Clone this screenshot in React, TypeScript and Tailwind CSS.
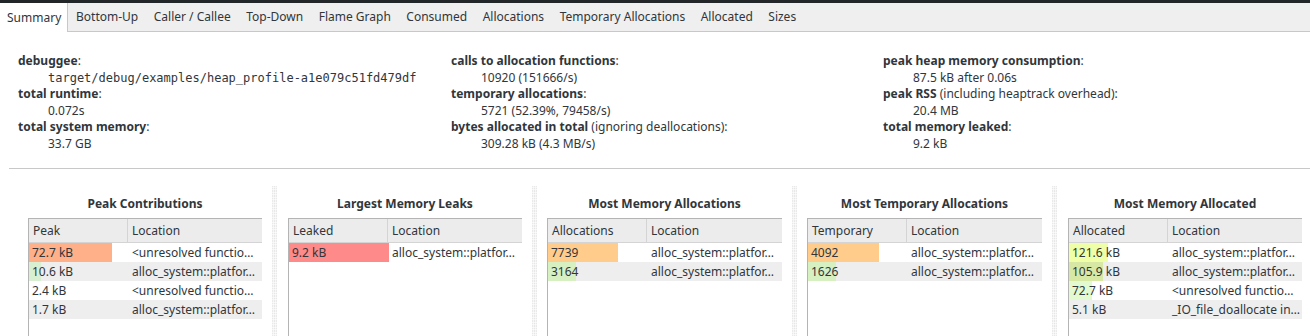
import React from "react";

const tabs = [
  "Summary",
  "Bottom-Up",
  "Caller / Callee",
  "Top-Down",
  "Flame Graph",
  "Consumed",
  "Allocations",
  "Temporary Allocations",
  "Allocated",
  "Sizes",
];

type Item = { label: string; extra?: string; value: string; mono?: boolean };

const cols: Item[][] = [
  [
    { label: "debuggee", value: "target/debug/examples/heap_profile-a1e079c51fd479df", mono: true },
    { label: "total runtime", value: "0.072s" },
    { label: "total system memory", value: "33.7 GB" },
  ],
  [
    { label: "calls to allocation functions", value: "10920 (151666/s)" },
    { label: "temporary allocations", value: "5721 (52.39%, 79458/s)" },
    { label: "bytes allocated in total", extra: " (ignoring deallocations)", value: "309.28 kB (4.3 MB/s)" },
  ],
  [
    { label: "peak heap memory consumption", value: "87.5 kB after 0.06s" },
    { label: "peak RSS", extra: " (including heaptrack overhead)", value: "20.4 MB" },
    { label: "total memory leaked", value: "9.2 kB" },
  ],
];

type Row = { v: string; loc: string; bar: number; color: string };
type Panel = { title: string; head: string; rows: Row[]; pl: string };

const panels: Panel[] = [
  {
    title: "Peak Contributions",
    head: "Peak",
    pl: "pl-[11px]",
    rows: [
      { v: "72.7 kB", loc: "<unresolved functio…", bar: 83, color: "#ffb088" },
      { v: "10.6 kB", loc: "alloc_system::platfor…", bar: 12, color: "#d8efd2" },
      { v: "2.4 kB", loc: "<unresolved functio…", bar: 0, color: "" },
      { v: "1.7 kB", loc: "alloc_system::platfor…", bar: 0, color: "" },
    ],
  },
  {
    title: "Largest Memory Leaks",
    head: "Leaked",
    pl: "pl-[11px]",
    rows: [{ v: "9.2 kB", loc: "alloc_system::platfor…", bar: 100, color: "#ff8a8a" }],
  },
  {
    title: "Most Memory Allocations",
    head: "Allocations",
    pl: "pl-[10px]",
    rows: [
      { v: "7739", loc: "alloc_system::platfor…", bar: 70, color: "#ffcc8c" },
      { v: "3164", loc: "alloc_system::platfor…", bar: 28, color: "#d6f0c2" },
    ],
  },
  {
    title: "Most Temporary Allocations",
    head: "Temporary",
    pl: "pl-[10px]",
    rows: [
      { v: "4092", loc: "alloc_system::platfor…", bar: 71, color: "#ffcc8c" },
      { v: "1626", loc: "alloc_system::platfor…", bar: 28, color: "#d6f0c2" },
    ],
  },
  {
    title: "Most Memory Allocated",
    head: "Allocated",
    pl: "pl-[11px]",
    rows: [
      { v: "121.6 kB", loc: "alloc_system::platfor…", bar: 39, color: "#efffa8" },
      { v: "105.9 kB", loc: "alloc_system::platfor…", bar: 34, color: "#d6e8a4" },
      { v: "72.7 kB", loc: "<unresolved functio…", bar: 23, color: "#e3fad0" },
      { v: "5.1 kB", loc: "_IO_file_doallocate in…", bar: 0, color: "" },
    ],
  },
];

function Handle() {
  return (
    <div className="w-[5px] shrink-0 self-stretch bg-[#e6e6e6] bg-[radial-gradient(circle,#ffffff_0.8px,transparent_1px)] bg-[length:2.5px_2.5px]" />
  );
}

function PanelView({ p }: { p: Panel }) {
  return (
    <div className={`w-[255px] shrink-0 flex flex-col pt-[9px] pr-[10px] ${p.pl}`}>
      <div className="h-[17px] leading-[17px] text-center font-bold text-[12px] text-[#31363b]">{p.title}</div>
      <div className="mt-[6px] flex-1 border-l border-t border-[#b4b4b4]">
        <div className="flex h-[24px] bg-[#ececec] border-b border-[#d4d4d4] items-center">
          <div className="w-[99px] h-full border-r border-[#d4d4d4] pl-[4px] flex items-center">{p.head}</div>
          <div className="flex-1 pl-[4px]">Location</div>
        </div>
        {p.rows.map((r, i) => (
          <div key={i} className={`flex h-[19px] items-center ${i % 2 === 1 ? "bg-[#eeeeee]" : "bg-white"}`}>
            <div className="relative w-[100px] h-full flex items-center">
              {r.bar > 0 && (
                <div className="absolute left-0 top-0 h-full" style={{ width: `${r.bar}px`, backgroundColor: r.color }} />
              )}
              <span className="relative pl-[3px]">{r.v}</span>
            </div>
            <div className="flex-1 pl-[3px] whitespace-nowrap overflow-hidden">{r.loc}</div>
          </div>
        ))}
      </div>
    </div>
  );
}

export default function App() {
  return (
    <div className="w-[1310px] h-[336px] overflow-hidden bg-white flex flex-col text-[12px] text-[#31363b] font-['Noto_Sans',sans-serif]">
      <div className="h-[3px] bg-[#232629] shrink-0" />
      <div className="h-[29px] shrink-0 flex bg-[#efefef] border-b border-[#c8c8c8]">
        {tabs.map((t, i) =>
          i === 0 ? (
            <div key={t} className="h-[29px] bg-white border-r border-[#c8c8c8] pl-[7px] pr-[6px] flex items-center">
              {t}
            </div>
          ) : (
            <div key={t} className="h-full px-[7.75px] flex items-center">
              {t}
            </div>
          )
        )}
      </div>
      <div className="grid grid-cols-[433px_432px_1fr] pl-[18px] pt-[21px] leading-[16.5px] shrink-0">
        {cols.map((c, ci) => (
          <div key={ci} className="flex flex-col">
            {c.map((it) => (
              <React.Fragment key={it.label}>
                <div className="whitespace-nowrap">
                  <span className="font-bold">{it.label}</span>
                  {it.extra}:
                </div>
                <div
                  className={`pl-[30px] whitespace-nowrap ${it.mono ? "font-['DejaVu_Sans_Mono',monospace]" : ""}`}
                >
                  {it.value}
                </div>
              </React.Fragment>
            ))}
          </div>
        ))}
      </div>
      <div className="mt-[16px] ml-[9px] h-px bg-[#c8c8c8] shrink-0" />
      <div className="flex-1 flex pl-[17px] pt-[17px] min-h-0">
        {panels.map((p, i) => (
          <React.Fragment key={p.title}>
            {i > 0 && <Handle />}
            <PanelView p={p} />
          </React.Fragment>
        ))}
      </div>
    </div>
  );
}
